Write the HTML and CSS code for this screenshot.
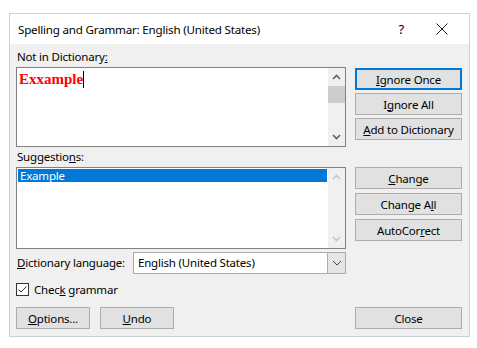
FILE: index.html
```
<!DOCTYPE html>
<html lang="en">
<head>
  <meta charset="UTF-8">
  <title>Spelling and Grammar</title>
  <link rel="stylesheet" href="styles.css">
</head>
<body>
  <div class="dialog">
    <!-- Barra de título -->
    <div class="titlebar">
      <span class="title">Spelling and Grammar: English (United States)</span>
      <span class="help">?</span>
      <svg class="close-x" width="12" height="12" viewBox="0 0 12 12">
        <path d="M0.5 0.5 L11.5 11.5 M11.5 0.5 L0.5 11.5" stroke="#222" stroke-width="1" fill="none"/>
      </svg>
    </div>

    <div class="content">
      <!-- Palavra não encontrada -->
      <div class="row first">
        <div class="left">
          <div class="label top">Not in Dictionary<u>:</u></div>
          <div class="box word-box">
            <div class="box-text"><span class="bad-word">Exxample</span><span class="caret"></span></div>
            <div class="scrollbar">
              <svg class="arrow" width="9" height="6" viewBox="0 0 9 6"><path d="M1 5 L4.5 1.5 L8 5" stroke="#606060" stroke-width="1.6" fill="none"/></svg>
              <div class="thumb"></div>
              <div class="spacer"></div>
              <svg class="arrow" width="9" height="6" viewBox="0 0 9 6"><path d="M1 1 L4.5 4.5 L8 1" stroke="#606060" stroke-width="1.6" fill="none"/></svg>
            </div>
          </div>
        </div>
        <div class="buttons first-buttons">
          <button class="btn default"><u>I</u>gnore Once</button>
          <button class="btn">I<u>g</u>nore All</button>
          <button class="btn"><u>A</u>dd to Dictionary</button>
        </div>
      </div>

      <!-- Sugestões -->
      <div class="row">
        <div class="left">
          <div class="label mid">Suggestio<u>n</u>s:</div>
          <div class="box list-box">
            <div class="list">
              <div class="item selected">Example</div>
            </div>
            <div class="scrollbar disabled">
              <svg class="arrow" width="9" height="6" viewBox="0 0 9 6"><path d="M1 5 L4.5 1.5 L8 5" stroke="#c4c4c4" stroke-width="1.6" fill="none"/></svg>
              <div class="spacer"></div>
              <svg class="arrow" width="9" height="6" viewBox="0 0 9 6"><path d="M1 1 L4.5 4.5 L8 1" stroke="#c4c4c4" stroke-width="1.6" fill="none"/></svg>
            </div>
          </div>
        </div>
        <div class="buttons second-buttons">
          <button class="btn"><u>C</u>hange</button>
          <button class="btn">Change A<u>l</u>l</button>
          <button class="btn">AutoCor<u>r</u>ect</button>
        </div>
      </div>

      <!-- Idioma -->
      <div class="lang-row">
        <span class="label"><u>D</u>ictionary language:</span>
        <div class="combo">
          <span class="combo-text">English (United States)</span>
          <div class="combo-btn">
            <svg width="10" height="6" viewBox="0 0 10 6"><path d="M1 1 L5 5 L9 1" stroke="#444" stroke-width="1" fill="none"/></svg>
          </div>
        </div>
      </div>

      <label class="check-row">
        <svg class="check" width="13" height="13" viewBox="0 0 13 13">
          <rect x="0.5" y="0.5" width="12" height="12" fill="#fff" stroke="#333"/>
          <path d="M2.5 6.5 L5 9 L10.5 3.5" stroke="#333" stroke-width="1" fill="none"/>
        </svg>
        <span>Chec<u>k</u> grammar</span>
      </label>

      <div class="bottom-row">
        <div class="bottom-left">
          <button class="btn small"><u>O</u>ptions...</button>
          <button class="btn small"><u>U</u>ndo</button>
        </div>
        <button class="btn wide">Close</button>
      </div>
    </div>
  </div>
</body>
</html>
```

FILE: styles.css
```
body {
  margin: 0;
  background-color: #fff;
  font-family: "Noto Sans", "Open Sans", sans-serif;
  font-size: 11.5px;
  letter-spacing: -0.2px;
  color: #000;
}

.dialog {
  margin: 13px 0 0 9px;
  width: 459px;
  height: 322px;
  border: 1px solid #cfcfcf;
  background-color: #f0f0f0;
  display: flex;
  flex-direction: column;
}

.titlebar {
  height: 30px;
  flex-shrink: 0;
  background-color: #fff;
  display: flex;
  align-items: center;
  padding-left: 8px;
  padding-right: 21px;
}

.title {
  flex: 1;
  font-size: 11.6px;
}

.help {
  margin-right: 32px;
  font-size: 13px;
}

.close-x {
  display: block;
}

.content {
  padding: 0 7px 0 6px;
}

.row {
  display: flex;
  gap: 9px;
}

.left {
  width: 330px;
}

.label {
  line-height: 16px;
  white-space: nowrap;
}

.label.top {
  height: 23px;
  padding-top: 5px;
  box-sizing: border-box;
  padding-left: 1px;
}

.label.mid {
  height: 20px;
  padding-top: 2px;
  box-sizing: border-box;
  padding-left: 1px;
}

.box {
  border: 1px solid #828282;
  background-color: #fff;
  display: flex;
  box-sizing: border-box;
}

.word-box {
  height: 80px;
}

.list-box {
  height: 82px;
}

.box-text {
  flex: 1;
  padding: 2px 2px;
  display: flex;
  align-items: flex-start;
}

.bad-word {
  font-family: "Liberation Serif", serif;
  font-weight: bold;
  font-size: 15px;
  letter-spacing: 0;
  color: #ff0000;
  line-height: 18px;
}

.caret {
  display: inline-block;
  width: 1px;
  height: 17px;
  margin-top: 1px;
  background-color: #000;
}

.scrollbar {
  width: 17px;
  background-color: #f0f0f0;
  display: flex;
  flex-direction: column;
  align-items: center;
}

.scrollbar .arrow {
  margin: 6px 0;
  flex-shrink: 0;
}

.thumb {
  width: 17px;
  height: 17px;
  background-color: #cdcdcd;
}

.spacer {
  flex: 1;
}

.list {
  flex: 1;
  padding: 1px 1px;
}

.item {
  height: 13px;
  line-height: 13px;
  padding-left: 2px;
}

.item.selected {
  background-color: #0078d7;
  color: #fff;
}

.buttons {
  display: flex;
  flex-direction: column;
}

.first-buttons {
  padding-top: 24px;
  gap: 3px;
}

.second-buttons {
  padding-top: 20px;
  gap: 4px;
}

.btn {
  width: 107px;
  height: 22px;
  padding: 0;
  font-family: "Noto Sans", "Open Sans", sans-serif;
  font-size: 11.5px;
  letter-spacing: -0.2px;
  color: #000;
  background-color: #e1e1e1;
  border: 1px solid #adadad;
  box-sizing: border-box;
}

.btn.default {
  border: 2px solid #0078d7;
}

.btn.small {
  width: 74px;
}

.lang-row {
  display: flex;
  align-items: center;
  margin-top: 3px;
  width: 330px;
}

.lang-row .label {
  width: 116px;
  padding-left: 1px;
}

.combo {
  flex: 1;
  height: 22px;
  border: 1px solid #aaa;
  background-color: #fff;
  display: flex;
  box-sizing: border-box;
}

.combo-text {
  flex: 1;
  padding-left: 4px;
  line-height: 20px;
}

.combo-btn {
  width: 17px;
  background-color: #e5e5e5;
  border-left: 1px solid #adadad;
  display: flex;
  align-items: center;
  justify-content: center;
}

.check-row {
  display: flex;
  align-items: center;
  gap: 5px;
  margin-top: 9px;
  height: 13px;
}

.check {
  display: block;
}

.bottom-row {
  display: flex;
  justify-content: space-between;
  margin-top: 11px;
}

.bottom-left {
  display: flex;
  gap: 10px;
}
```
